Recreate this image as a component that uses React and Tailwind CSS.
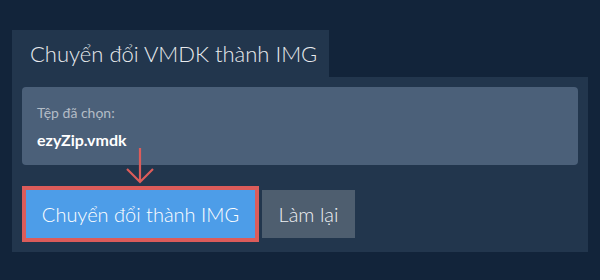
export default function App() {
  return (
    <div className="w-[600px] h-[280px] bg-[#12243a] pt-[30px] px-[12px] font-['Lato',sans-serif] overflow-hidden">
      <div className="w-[317px] h-[47px] bg-[#22364d] pl-[18px] text-[22px] font-light leading-[47px] text-[#e8ebee]">
        Chuyển đổi VMDK thành IMG
      </div>
      <div className="relative bg-[#22364d] px-[10px] pt-[10px] pb-[14px]">
        <div className="h-[78px] rounded-[4px] bg-[#4b6079] px-[15px] pt-[17px]">
          <div className="text-[14px] leading-[18px] text-[#b3bcc6]">Tệp đã chọn:</div>
          <div className="mt-[8px] text-[16px] leading-[20px] font-bold text-white">ezyZip.vmdk</div>
        </div>
        <svg className="absolute left-[114px] top-[71px]" width="28" height="36" viewBox="0 0 28 36">
          <path d="M14 0 V34 M1 21 L14 34 L27 21" fill="none" stroke="#dc5c5a" strokeWidth="2.2" />
        </svg>
        <div className="mt-[25px] flex gap-[7px] pl-[4px]">
          <button className="h-[48px] w-[229px] bg-[#4d9de8] text-white text-[20px] font-light outline-[4px] outline-solid outline-[#dc5c5a]">
            Chuyển đổi thành IMG
          </button>
          <button className="h-[48px] w-[93px] bg-[#4e5e6f] text-[#eef1f4] text-[20px] font-light">
            Làm lại
          </button>
        </div>
      </div>
    </div>
  );
}
